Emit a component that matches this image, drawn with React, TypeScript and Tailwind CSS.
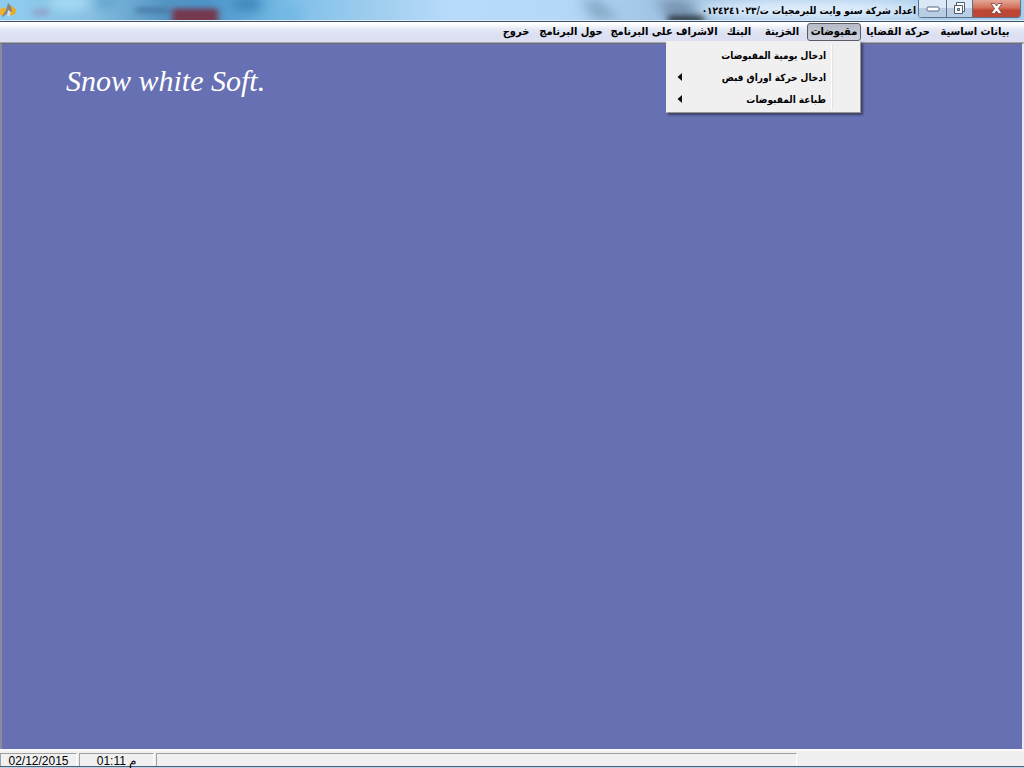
import { useState } from 'react'
import clsx from 'clsx'

interface MenuEntry {
  label: string
  submenu?: boolean
}

interface Menu {
  label: string
  width: string
  entries?: MenuEntry[]
}

const menus: Menu[] = [
  { label: 'بيانات اساسية', width: 'w-20' },
  { label: 'حركة القضايا', width: 'w-[72px]' },
  {
    label: 'مقبوضات',
    width: 'w-[54px]',
    entries: [
      { label: 'ادخال يومية المقبوضات' },
      { label: 'ادخال حركة اوراق قبض', submenu: true },
      { label: 'طباعة المقبوضات', submenu: true },
    ],
  },
  { label: 'الخزينة', width: 'w-12' },
  { label: 'البنك', width: 'w-9' },
  { label: 'الاشراف على البرنامج', width: 'w-28' },
  { label: 'حول البرنامج', width: 'w-[72px]' },
  { label: 'خروج', width: 'w-9' },
]

function GlassBackdrop() {
  return (
    <svg className="absolute inset-0 h-full w-full" viewBox="0 0 1024 21" preserveAspectRatio="none" aria-hidden="true">
      <defs>
        <linearGradient id="glass" x1="0" x2="1" y1="0" y2="0">
          <stop offset="0" stopColor="#8fcdf0" />
          <stop offset="0.09" stopColor="#86bfe0" />
          <stop offset="0.16" stopColor="#5595c4" />
          <stop offset="0.2" stopColor="#4c92c6" />
          <stop offset="0.25" stopColor="#65aedd" />
          <stop offset="0.3" stopColor="#86c2ea" />
          <stop offset="0.38" stopColor="#a4d0ef" />
          <stop offset="0.44" stopColor="#b8dbfc" />
          <stop offset="0.55" stopColor="#b6d8f8" />
          <stop offset="0.66" stopColor="#9cc0e0" />
          <stop offset="0.75" stopColor="#a9cdec" />
          <stop offset="1" stopColor="#a9cdec" />
        </linearGradient>
        <filter id="soft" x="-50%" y="-50%" width="200%" height="200%">
          <feGaussianBlur stdDeviation="3" />
        </filter>
        <filter id="softer" x="-50%" y="-100%" width="200%" height="300%">
          <feGaussianBlur stdDeviation="6" />
        </filter>
      </defs>
      <rect width="1024" height="21" fill="url(#glass)" />
      <g filter="url(#softer)">
        <ellipse cx="70" cy="3" rx="22" ry="8" fill="#a9dcf6" />
        <ellipse cx="105" cy="2" rx="14" ry="6" fill="#5fa3cf" />
        <ellipse cx="247" cy="4" rx="16" ry="8" fill="#3e86b8" />
        <ellipse cx="290" cy="16" rx="14" ry="8" fill="#72bae6" />
        <path d="M580 0h20l20 21h-25z" fill="#86a9c8" />
        <path d="M655 0h30l25 21h-40z" fill="#7894b0" />
      </g>
      <g filter="url(#soft)">
        <rect x="33" y="9" width="16" height="8" fill="#8fa9cf" />
        <rect x="136" y="8" width="34" height="6" fill="#4a7ca6" />
        <rect x="172" y="9" width="46" height="16" fill="#74384d" />
        <rect x="668" y="16" width="36" height="8" fill="#34424f" />
      </g>
      <ellipse cx="811" cy="10" rx="115" ry="9" fill="#e3effc" filter="url(#softer)" />
    </svg>
  )
}

function AppIcon() {
  return (
    <svg className="relative h-4 w-4" viewBox="0 0 16 16" aria-hidden="true">
      <path d="M0 9c0-3 4-5 6-2l-1 5-3 2-2-2z" fill="#efb12c" />
      <path d="M10 5c3-1 6 1 6 4 0 3-3 5-6 4z" fill="#e9ac28" />
      <path d="M8 1l3 3 1 6-3 1-4 2-2 2-1-1 4-6z" fill="#8b867c" />
      <path d="M8 8l3 2-2 5-2-2z" fill="#d8dde0" />
    </svg>
  )
}

function WindowButtons() {
  const base = 'flex h-[18px] items-center justify-center border-b border-[#5d7188]'
  const glass = 'bg-linear-to-b from-[#dbe8f5] from-50% to-[#b9cee4] to-50%'
  return (
    <div className="relative mr-[3px] ml-0.5 flex self-start overflow-hidden rounded-b-[4px] border-x border-[#5d7188]">
      <button aria-label="Minimize" className={clsx(base, glass, 'w-7 border-r')}>
        <svg width="14" height="6" viewBox="0 0 14 6">
          <rect x="1" y="1" width="12" height="4" rx="1" fill="#fff" stroke="#56687c" />
        </svg>
      </button>
      <button aria-label="Restore" className={clsx(base, glass, 'w-[26px] border-r')}>
        <svg width="13" height="13" viewBox="0 0 13 13" stroke="#4d5e70" fill="#fff">
          <path d="M3.500 .5h8v9h-8z" />
          <path d="M1.500 3.500h8v8h-8z" />
          <path d="M4.500 6.500h2v2h-2z" fill="#a9c2dc" />
        </svg>
      </button>
      <button
        aria-label="Close"
        className={clsx(base, 'w-[47px] bg-linear-to-b from-[#e3a797] from-0% via-[#d4705b] via-45% to-[#bd4634] to-60%')}
      >
        <svg width="13" height="11" viewBox="0 0 13 11">
          <path d="M1 .5h3.500l2 2.500 2-2.500H12L8.500 5.500l3.500 5H8.500l-2-2.500-2 2.500H1l3.500-5z" fill="#fff" stroke="#704248" strokeWidth=".8" />
        </svg>
      </button>
    </div>
  )
}

function DropDown({ entries }: { entries: MenuEntry[] }) {
  return (
    <ul className="absolute top-full right-0 z-10 w-[195px] border border-[#979797] border-t-[#f0f0f0] border-l-[#f0f0f0] bg-[#f0f0f0] py-0.5 text-[10px] shadow-[2px_2px_2px_rgba(40,40,60,0.65)]">
      {entries.map(({ label, submenu }) => (
        <li key={label}>
          <button className="flex h-[22px] w-full items-center">
            <span className="h-full w-7 border-l border-[#e2e3e3] shadow-[-1px_0_0_#fff]" />
            <span className="flex-1 px-1.5 text-right whitespace-nowrap">{label}</span>
            {submenu && (
              <svg className="ml-2.5" width="5" height="8" viewBox="0 0 5 8" aria-hidden="true">
                <path d="M5 0v8L0.500 4z" fill="#111" />
              </svg>
            )}
          </button>
        </li>
      ))}
    </ul>
  )
}

export default function App() {
  const [open, setOpen] = useState('مقبوضات')

  return (
    <div className="flex min-h-screen flex-col bg-[#f0f0f0] font-['DejaVu_Sans_Condensed','DejaVu_Sans',sans-serif] text-[11px] font-bold text-black">
      <header className="relative flex h-[21px] items-center border-b border-[#dcecf8]">
        <GlassBackdrop />
        <AppIcon />
        <h1 dir="rtl" className="relative ml-auto text-[10px] whitespace-nowrap">
          اعداد شركة سنو وايت للبرمجيات ت/٠١٢٤٢٤١٠٢٣
        </h1>
        <WindowButtons />
      </header>

      <nav
        dir="rtl"
        className="flex h-[22px] items-start gap-px border-t border-b border-t-[#3c5068] border-b-[#a5a6ae] bg-linear-to-b from-white from-10% via-[#e4e9f5] via-35% to-[#dce0f2] to-60% pt-px pr-[9px]"
      >
        {menus.map(({ label, width, entries }) => (
          <div key={label} className={clsx('relative h-[18px]', width)}>
            <button
              onClick={() => setOpen(open === label ? '' : label)}
              className={clsx(
                'flex h-[18px] w-full items-center justify-center rounded-[3px] border pt-px whitespace-nowrap',
                entries && open === label
                  ? 'border-[#5a5d68] bg-linear-to-b from-[#b7bbc8] to-[#cfd3e0]'
                  : 'border-transparent',
              )}
            >
              {label}
            </button>
            {entries && open === label && <DropDown entries={entries} />}
          </div>
        ))}
      </nav>

      <main className="flex-1 border-t border-r-2 border-l-2 border-t-[#6d6d78] border-r-[#e6e8f4] border-l-[#8b8c98] bg-[#6670b2] px-16 py-5">
        <p className="font-['Liberation_Serif',serif] text-[30px] leading-[34px] font-normal text-white italic">Snow white Soft.</p>
      </main>

      <footer className="border-t-2 border-b border-t-[#fafafe] border-b-[#b9cfe4] font-['Liberation_Sans',sans-serif] text-xs leading-[14px] font-normal">
        <div className="flex h-4 gap-0.5 border-b border-b-[#4a6078] pt-0.5">
          <span className="w-[77px] border-t border-r border-l border-t-[#a0a0a0] border-r-white border-l-[#a0a0a0] text-center">02/12/2015</span>
          <span className="w-[75px] border-t border-r border-l border-t-[#a0a0a0] border-r-white border-l-[#a0a0a0] text-center">01:11 م</span>
          <span className="w-[641px] border-t border-r border-l border-t-[#a0a0a0] border-r-white border-l-[#a0a0a0]" />
        </div>
      </footer>
    </div>
  )
}
